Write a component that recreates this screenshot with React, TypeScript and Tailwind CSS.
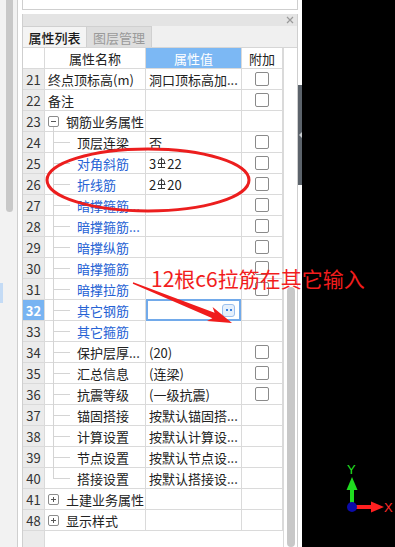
import React from 'react';

type Row = {
  no: number;
  name: string;
  value?: React.ReactNode;
  check?: boolean;
  kind: 'top' | 'group' | 'child';
  open?: boolean;
  blue?: boolean;
  last?: boolean;
  active?: boolean;
};

const Rebar = () => (
  <svg width="9" height="12" viewBox="0 0 9 12" className="mx-[1px] inline-block">
    <path
      d="M1.5 6.5V4.5Q1.5 2 4.5 2Q7.5 2 7.5 4.5V6.5M0.5 6.5H8.5M4.5 0.5V10.5M1 10.5H8"
      stroke="#333"
      fill="none"
      strokeWidth="1"
    />
  </svg>
);

const rows: Row[] = [
  { no: 21, name: '终点顶标高(m)', value: '洞口顶标高加...', check: true, kind: 'top' },
  { no: 22, name: '备注', check: true, kind: 'top' },
  { no: 23, name: '钢筋业务属性', kind: 'group', open: true },
  { no: 24, name: '顶层连梁', value: '否', check: true, kind: 'child' },
  { no: 25, name: '对角斜筋', value: <>3<Rebar />22</>, check: true, kind: 'child', blue: true },
  { no: 26, name: '折线筋', value: <>2<Rebar />20</>, check: true, kind: 'child', blue: true },
  { no: 27, name: '暗撑箍筋...', check: true, kind: 'child', blue: true },
  { no: 28, name: '暗撑箍筋...', check: true, kind: 'child', blue: true },
  { no: 29, name: '暗撑纵筋', check: true, kind: 'child', blue: true },
  { no: 30, name: '暗撑箍筋', check: true, kind: 'child', blue: true },
  { no: 31, name: '暗撑拉筋', check: true, kind: 'child', blue: true },
  { no: 32, name: '其它钢筋', kind: 'child', blue: true, active: true },
  { no: 33, name: '其它箍筋', kind: 'child', blue: true },
  { no: 34, name: '保护层厚...', value: '(20)', check: true, kind: 'child' },
  { no: 35, name: '汇总信息', value: '(连梁)', check: true, kind: 'child' },
  { no: 36, name: '抗震等级', value: '(一级抗震)', check: true, kind: 'child' },
  { no: 37, name: '锚固搭接', value: '按默认锚固搭...', kind: 'child' },
  { no: 38, name: '计算设置', value: '按默认计算设...', kind: 'child' },
  { no: 39, name: '节点设置', value: '按默认节点设...', kind: 'child' },
  { no: 40, name: '搭接设置', value: '按默认搭接设...', kind: 'child', last: true },
  { no: 41, name: '土建业务属性', kind: 'group' },
  { no: 48, name: '显示样式', kind: 'group' },
];

const Toggle = ({ open }: { open?: boolean }) => (
  <div className="relative w-[11px] h-[11px] border border-[#8c8c8c] rounded-[2px] bg-white shrink-0">
    <div className="absolute left-[2px] top-[4px] w-[5px] h-px bg-[#555]" />
    {!open && <div className="absolute left-[4px] top-[2px] w-px h-[5px] bg-[#555]" />}
  </div>
);

const Checkbox = () => (
  <div className="w-[14px] h-[14px] border border-[#8a8a8a] rounded-[2px] bg-white" />
);

const NameCell = ({ row }: { row: Row }) => {
  const color = row.blue ? 'text-[#2461d4]' : 'text-[#222]';
  if (row.kind === 'top') {
    return <div className={`w-[101px] border-r border-[#dadada] pl-[3px] flex items-center ${color}`}>{row.name}</div>;
  }
  if (row.kind === 'group') {
    return (
      <div className="relative w-[101px] border-r border-[#dadada] pl-[3px] flex items-center gap-[7px] text-[#222]">
        <Toggle open={row.open} />
        <span>{row.name}</span>
        {row.open && <div className="absolute left-[8px] top-[16px] bottom-[-1px] w-px bg-[#d4d4d4]" />}
      </div>
    );
  }
  return (
    <div className={`relative w-[101px] border-r border-[#dadada] pl-[32px] flex items-center ${color}`}>
      <div className={`absolute left-[8px] top-[-1px] w-px bg-[#d4d4d4] ${row.last ? 'h-[11px]' : 'bottom-[-1px]'}`} />
      <div className="absolute left-[8px] top-[10px] w-[17px] h-px bg-[#d4d4d4]" />
      <span>{row.name}</span>
    </div>
  );
};

const TableRow = ({ row }: { row: Row }) => (
  <div className="flex h-[21px] border-b border-[#dadada]">
    <div
      className={`w-[22px] border-r border-[#dadada] flex items-center justify-center ${
        row.active ? 'bg-[#78b4f2] text-white font-bold' : 'bg-[#ebebeb] text-[#333]'
      }`}
    >
      {row.no}
    </div>
    <NameCell row={row} />
    {row.active ? (
      <div className="w-[96px] border-r border-[#dadada] flex">
        <div className="flex-1 border-2 border-[#72aaea] bg-white flex items-center justify-end pr-[4px] mt-[-1px] mb-[-1px]">
          <div className="w-[13px] h-[13px] rounded-[3px] border border-[#9cc0ee] bg-[#e6f0fc] flex items-center justify-center gap-[2px]">
            <div className="w-[2px] h-[2px] bg-[#3b82e0]" />
            <div className="w-[2px] h-[2px] bg-[#3b82e0]" />
          </div>
        </div>
      </div>
    ) : (
      <div className="w-[96px] border-r border-[#dadada] pl-[3px] flex items-center text-[#222] whitespace-nowrap overflow-hidden">
        {row.value}
      </div>
    )}
    <div className="w-[41px] border-r border-[#dadada] flex items-center justify-center">
      {row.check && <Checkbox />}
    </div>
  </div>
);

export default function App() {
  return (
    <div
      className="relative w-[395px] h-[547px] overflow-hidden flex bg-white text-[13px] leading-none"
      style={{ fontFamily: '"Noto Sans CJK SC", "Noto Sans", sans-serif' }}
    >
      {/* left strip */}
      <div className="w-[18px] shrink-0 bg-[#f2f2f2] border-r border-[#cfcfcf] flex flex-col">
        <div className="ml-[6px] w-[7px] h-[212px] bg-[#c8c8c8] rounded-b-[4px]" />
        <div className="mt-[71px] w-[3px] h-[20px] bg-[#c4dbf5]" />
      </div>
      <div className="w-[4px] shrink-0" />

      {/* property panel */}
      <div className="w-[276px] shrink-0 flex flex-col">
        <div className="h-[16px] border-x border-b border-[#cfcfcf] bg-white" />
        <div className="mt-[4px] flex-1 border-x border-[#cfcfcf] flex flex-col">
          <div className="h-[12px] bg-[#e4e4e4] flex items-center justify-end pr-[3px]">
            <svg width="8" height="8" viewBox="0 0 8 8">
              <path d="M1 1L7 7M7 1L1 7" stroke="#9a9a9a" strokeWidth="1.2" />
            </svg>
          </div>
          <div className="h-[22px] bg-[#f0f0f0] flex border-b border-[#d6d6d6]">
            <div className="w-[64px] border-r border-t border-[#d0d0d0] bg-[#f4f4f4] flex items-center justify-center text-[#1a1a1a] font-medium">
              属性列表
            </div>
            <div className="w-[65px] border-r border-t border-[#d0d0d0] bg-[#dedede] flex items-center justify-center text-[#9a9a9a]">
              图层管理
            </div>
          </div>
          <div className="flex flex-1">
            <div className="w-[260px] flex flex-col">
              <div className="flex h-[21px] border-b border-[#dadada] text-[#222]">
                <div className="w-[22px] border-r border-[#dadada] bg-white" />
                <div className="w-[101px] border-r border-[#dadada] flex items-center justify-center">属性名称</div>
                <div className="w-[96px] border-r border-[#dadada] bg-[#7cb8f4] text-white flex items-center justify-center">属性值</div>
                <div className="w-[41px] border-r border-[#dadada] flex items-center justify-center">附加</div>
              </div>
              {rows.map((r) => (
                <TableRow key={r.no} row={r} />
              ))}
              <div className="flex flex-1">
                <div className="w-[22px] bg-[#ebebeb] border-r border-[#dadada]" />
              </div>
            </div>
            <div className="flex-1 border-l border-[#dadada] bg-white flex flex-col">
              <div className="mt-[239px] ml-[3px] w-[8px] h-[260px] rounded-[4px] bg-[#c8c8c8]" />
            </div>
          </div>
        </div>
      </div>

      {/* collapse strip */}
      <div className="w-[4px] shrink-0 bg-white flex flex-col">
        <div className="mt-[85px] h-[100px] bg-[#5c636b] flex items-center justify-center">
          <svg width="3" height="6" viewBox="0 0 3 6">
            <path d="M3 0L0 3L3 6Z" fill="#c8ccd0" />
          </svg>
        </div>
      </div>

      {/* viewport */}
      <div className="relative flex-1 bg-black">
        <svg className="absolute left-0 top-[455px]" width="93" height="70" viewBox="0 0 93 70">
          <text x="45" y="19" fill="#22e022" fontSize="13" fontFamily="Liberation Sans, sans-serif">Y</text>
          <rect x="48" y="33" width="4" height="18" fill="#1fdc1f" />
          <path d="M44.5 35L50 22L55.5 35Z" fill="#1fdc1f" />
          <rect x="52" y="50" width="18" height="4" fill="#ff2020" />
          <path d="M69 46.5L82 52L69 57.5Z" fill="#ff2020" />
          <text x="82" y="57" fill="#ff2a2a" fontSize="13" fontFamily="Liberation Sans, sans-serif">X</text>
          <circle cx="50" cy="52" r="5" fill="#0b0ba8" />
        </svg>
      </div>

      {/* annotations */}
      <svg className="absolute left-0 top-0 pointer-events-none" width="395" height="547" viewBox="0 0 395 547">
        <ellipse cx="148" cy="180" rx="101" ry="31" fill="none" stroke="#ec1e1e" strokeWidth="3" />
        <polygon
          points="133.2,282.3 214.6,312.7 212.6,307 232,323 207,321 212.4,318.3 132.8,283.7"
          fill="#f01c1c"
        />
      </svg>
      <div className="absolute left-[151px] top-[268px] text-[21px] leading-none text-[#f21d1d] whitespace-nowrap">
        12根c6拉筋在其它输入
      </div>
    </div>
  );
}
